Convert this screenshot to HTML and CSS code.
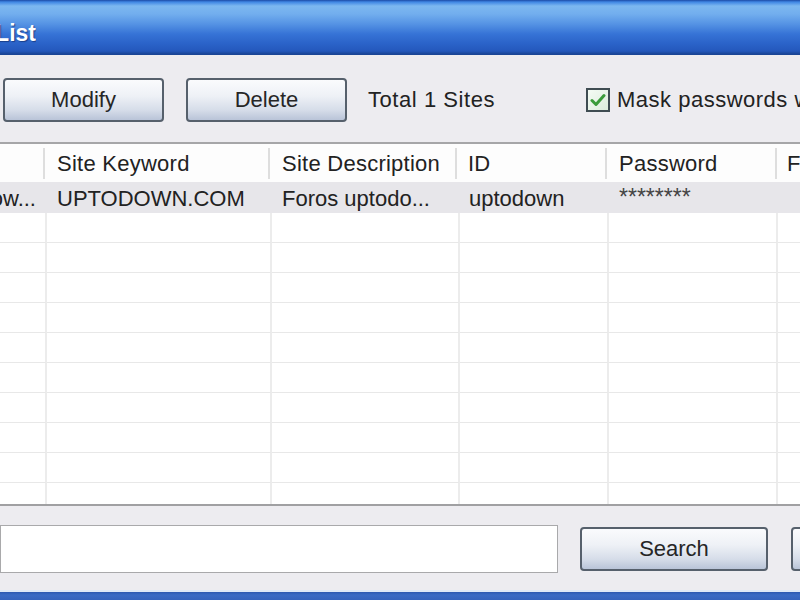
FILE: index.html
```html
<!DOCTYPE html>
<html>
<head>
<meta charset="utf-8">
<link rel="stylesheet" href="styles.css">
</head>
<body>
<div class="window">
  <div class="titlebar">
    <div class="title"><span>Site List</span></div>
  </div>
  <div class="toolbar">
    <button class="btn btn-modify">Modify</button>
    <button class="btn btn-delete">Delete</button>
    <span class="total">Total 1 Sites</span>
    <label class="mask">
      <span class="check">
        <svg width="16" height="14" viewBox="0 0 16 14"><path d="M2 7.5 L6 11.5 L14 2.5" fill="none" stroke="#3a9b3a" stroke-width="3" stroke-linecap="round" stroke-linejoin="round"/></svg>
      </span>
      <span class="mask-text">Mask passwords with asterisks</span>
    </label>
  </div>
  <div class="table">
    <div class="row head">
      <div class="c c0"></div>
      <div class="c c1">Site Keyword</div>
      <div class="c c2">Site Description</div>
      <div class="c c3">ID</div>
      <div class="c c4">Password</div>
      <div class="c c5">Form</div>
    </div>
    <div class="tbody">
      <div class="row data">
        <div class="c c0 clipl"><span>www.uptodow...</span></div>
        <div class="c c1">UPTODOWN.COM</div>
        <div class="c c2">Foros uptodo...</div>
        <div class="c c3">uptodown</div>
        <div class="c c4 stars">********</div>
        <div class="c c5"></div>
      </div>
      <div class="row empty"><div class="c c0"></div><div class="c c1"></div><div class="c c2"></div><div class="c c3"></div><div class="c c4"></div><div class="c c5"></div></div>
      <div class="row empty"><div class="c c0"></div><div class="c c1"></div><div class="c c2"></div><div class="c c3"></div><div class="c c4"></div><div class="c c5"></div></div>
      <div class="row empty"><div class="c c0"></div><div class="c c1"></div><div class="c c2"></div><div class="c c3"></div><div class="c c4"></div><div class="c c5"></div></div>
      <div class="row empty"><div class="c c0"></div><div class="c c1"></div><div class="c c2"></div><div class="c c3"></div><div class="c c4"></div><div class="c c5"></div></div>
      <div class="row empty"><div class="c c0"></div><div class="c c1"></div><div class="c c2"></div><div class="c c3"></div><div class="c c4"></div><div class="c c5"></div></div>
      <div class="row empty"><div class="c c0"></div><div class="c c1"></div><div class="c c2"></div><div class="c c3"></div><div class="c c4"></div><div class="c c5"></div></div>
      <div class="row empty"><div class="c c0"></div><div class="c c1"></div><div class="c c2"></div><div class="c c3"></div><div class="c c4"></div><div class="c c5"></div></div>
      <div class="row empty"><div class="c c0"></div><div class="c c1"></div><div class="c c2"></div><div class="c c3"></div><div class="c c4"></div><div class="c c5"></div></div>
      <div class="row empty"><div class="c c0"></div><div class="c c1"></div><div class="c c2"></div><div class="c c3"></div><div class="c c4"></div><div class="c c5"></div></div>
      <div class="row empty"><div class="c c0"></div><div class="c c1"></div><div class="c c2"></div><div class="c c3"></div><div class="c c4"></div><div class="c c5"></div></div>
    </div>
  </div>
  <div class="searchbar">
    <input class="search-input" type="text">
    <button class="btn btn-search">Search</button>
    <button class="btn btn-close">Close</button>
  </div>
  <div class="bottomedge"></div>
</div>
</body>
</html>
```

FILE: styles.css
```css
* { box-sizing: border-box; }
html, body { margin: 0; padding: 0; }
body {
  width: 800px;
  height: 600px;
  overflow: hidden;
  background: #edecf0;
  font-family: "Liberation Sans", Arial, sans-serif;
  font-size: 22px;
  color: #222;
}
.window {
  width: 800px;
  height: 600px;
  display: flex;
  flex-direction: column;
  overflow: hidden;
}
.titlebar {
  height: 55px;
  flex: none;
  background: linear-gradient(to bottom, #1c4aa6 0px, #3f86e4 2px, #7cb7f0 6px, #72aeee 14px, #5593e4 24px, #3673d6 34px, #2a62c8 44px, #2458bc 51px, #1a4596 54px, #1a4596 55px);
  display: flex;
  align-items: center;
}
.title {
  width: 36px;
  overflow: hidden;
  display: flex;
  justify-content: flex-end;
  white-space: nowrap;
  color: #fff;
  font-weight: bold;
  font-size: 23px;
  padding-top: 11px;
  text-shadow: 1px 1px 1px #1a3f8a;
}
.title span { flex: none; }
.toolbar {
  height: 87px;
  flex: none;
  display: flex;
  align-items: center;
  padding-top: 2px;
  white-space: nowrap;
}
.btn {
  font-family: "Liberation Sans", Arial, sans-serif;
  font-size: 22px;
  color: #262626;
  height: 44px;
  border: 2px solid #56606c;
  border-radius: 4px;
  background: linear-gradient(to bottom, #fafbfd 0%, #eef1f6 40%, #d6dde9 75%, #b9c4d8 100%);
  padding: 0;
  flex: none;
}
.btn-modify { width: 161px; margin-left: 3px; }
.btn-delete { width: 161px; margin-left: 22px; }
.total { margin-left: 21px; letter-spacing: 0.55px; }
.mask {
  margin-left: 91px;
  display: flex;
  align-items: center;
}
.check {
  width: 24px;
  height: 24px;
  border: 2px solid #3f4c52;
  background: linear-gradient(to bottom right, #f4fbf4, #dcecdc);
  display: flex;
  align-items: center;
  justify-content: center;
  flex: none;
}
.mask-text { margin-left: 7px; letter-spacing: 0.5px; }

.table {
  flex: none;
  border-top: 2px solid #a6a6a8;
  border-bottom: 2px solid #a0a0a2;
  background: #fff;
}
.row {
  display: flex;
  white-space: nowrap;
}
.c {
  flex: none;
  overflow: hidden;
  padding-left: 10px;
  display: flex;
  align-items: center;
}
.c0 { width: 47px; }
.c1 { width: 225px; }
.c2 { width: 188px; }
.c3 { width: 149px; }
.c4 { width: 169px; }
.c5 { flex: 1; }
.head {
  height: 38px;
  background: #fdfdfd;
  padding: 4px 0 3px;
  letter-spacing: 0.25px;
}
.head .c {
  border-right: 2px solid #dedede;
  padding-left: 12px;
  padding-top: 1px;
}
.head .c0 { width: 45px; }
.head .c1 { width: 225px; }
.head .c2 { width: 187px; }
.head .c3 { width: 150px; padding-left: 11px; }
.head .c4 { width: 170px; }
.head .c5 { border-right: none; padding-left: 10px; }
.tbody {
  height: 322px;
  overflow: hidden;
}
.data {
  height: 31px;
  background: #e7e6ea;
}
.data .c { padding-top: 3px; }
.data .c3 { padding-left: 9px; }
.clipl {
  justify-content: flex-end;
  padding-right: 11px;
}
.clipl span { flex: none; }
.stars {
  font-size: 23px;
  align-items: flex-start;
  color: #444;
}
.data .stars { padding-top: 2px; }
.empty {
  height: 30px;
}
.empty .c {
  border-right: 2px solid #ececec;
  border-bottom: 1px solid #e8e8e8;
}
.empty .c5 { border-right: none; }

.searchbar {
  flex: 1;
  display: flex;
  align-items: flex-start;
  padding-top: 19px;
}
.search-input {
  width: 558px;
  height: 48px;
  border: 1px solid #a9a9ab;
  background: #fff;
  flex: none;
  margin: 0;
}
.btn-search { width: 188px; margin-left: 22px; margin-top: 2px; }
.btn-close { width: 120px; margin-left: 23px; margin-top: 2px; }
.bottomedge {
  height: 10px;
  flex: none;
  background: linear-gradient(to bottom, #dfe8f6 0px, #dfe8f6 2px, #2c58b0 2px, #3a6ac4 5px, #3562bc 10px);
}
```
